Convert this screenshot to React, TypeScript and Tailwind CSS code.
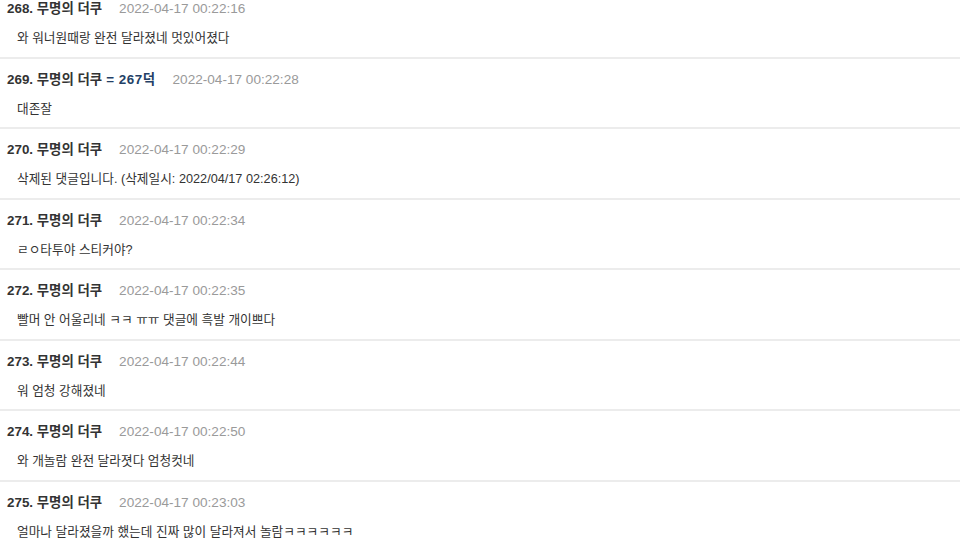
import React from "react";

type Row = { n: number; extra?: string; date: string; body: string };

const rows: Row[] = [
  { n: 268, date: "2022-04-17 00:22:16", body: "와 워너원때랑 완전 달라졌네 멋있어졌다" },
  { n: 269, extra: "= 267덕", date: "2022-04-17 00:22:28", body: "대존잘" },
  { n: 270, date: "2022-04-17 00:22:29", body: "삭제된 댓글입니다. (삭제일시: 2022/04/17 02:26:12)" },
  { n: 271, date: "2022-04-17 00:22:34", body: "ㄹㅇ타투야 스티커야?" },
  { n: 272, date: "2022-04-17 00:22:35", body: "빨머 안 어울리네 ㅋㅋ ㅠㅠ 댓글에 흑발 개이쁘다" },
  { n: 273, date: "2022-04-17 00:22:44", body: "워 엄청 강해졌네" },
  { n: 274, date: "2022-04-17 00:22:50", body: "와 개놀람 완전 달라졋다 엄청컷네" },
  { n: 275, date: "2022-04-17 00:23:03", body: "얼마나 달라졌을까 했는데 진짜 많이 달라져서 놀람ㅋㅋㅋㅋㅋㅋ" },
];

export default function App() {
  return (
    <div
      className="w-[960px] h-[547px] overflow-hidden bg-white"
      style={{ fontFamily: '"Liberation Sans", "Noto Sans CJK KR", sans-serif' }}
    >
      <div className="-mt-[12px] flex flex-col">
        {rows.map((r) => (
          <div key={r.n} className="h-[70.5px] border-b-2 border-[#ececec] pt-[12px]">
            <div className="flex items-center h-[18px] pl-[7px] gap-[17px]">
              <span className="text-[13.4px] font-bold text-[#333333] leading-[18px] whitespace-pre">
                {r.n}. 무명의 더쿠
                {r.extra && <span className="text-[#233f66] tracking-[0.5px]">{" " + r.extra}</span>}
              </span>
              <span className="text-[13.6px] text-[#9a9a9a] leading-[18px]">{r.date}</span>
            </div>
            <div className="mt-[11px] pl-[17px] text-[12.7px] leading-[18px] text-[#333333]">{r.body}</div>
          </div>
        ))}
      </div>
    </div>
  );
}
